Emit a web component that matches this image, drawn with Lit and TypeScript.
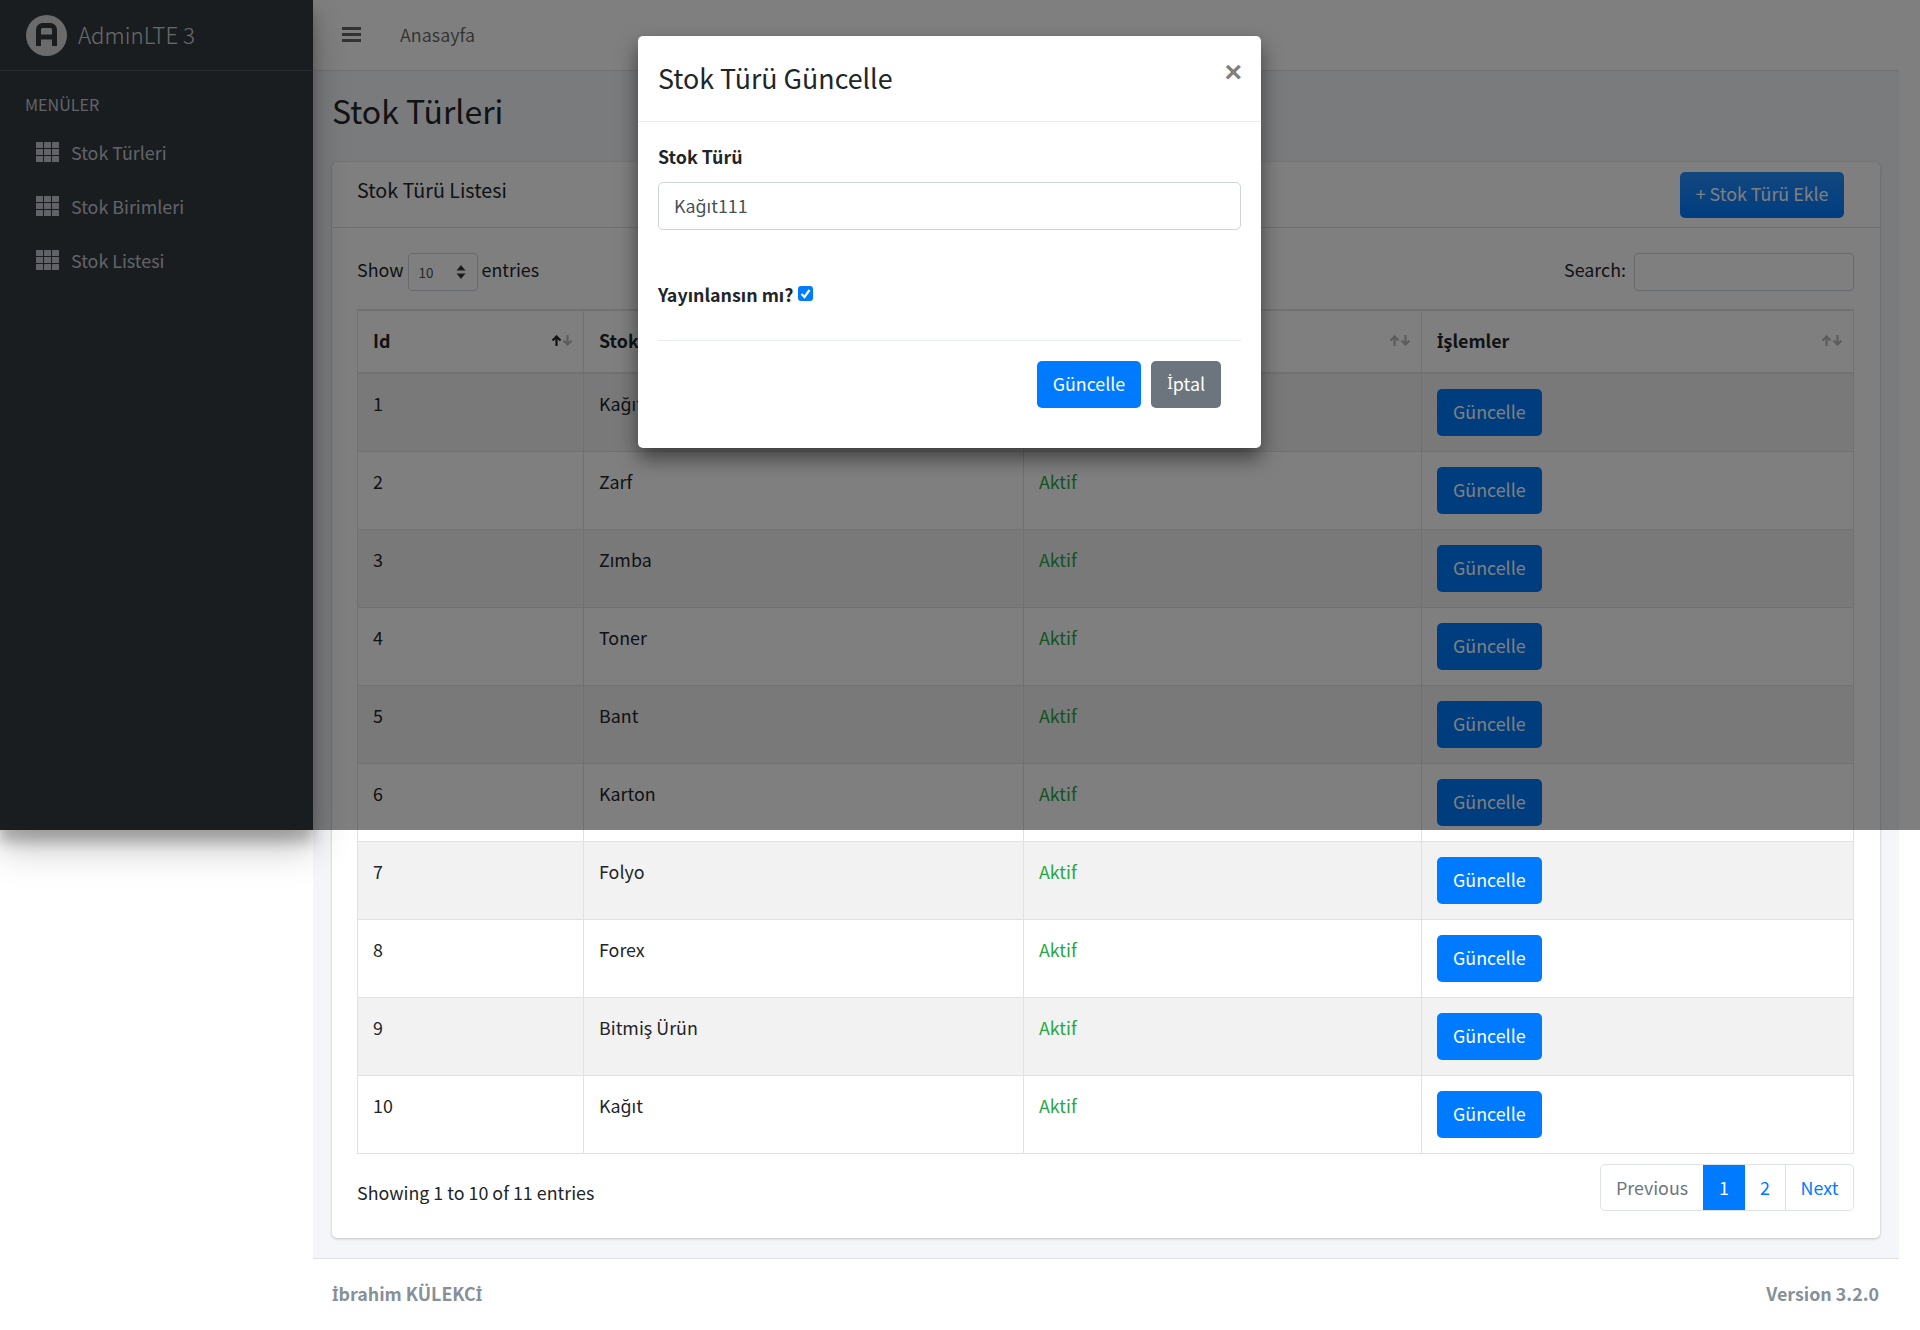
import { LitElement, html, css, svg } from 'lit';
import { customElement } from 'lit/decorators.js';

const ROWS = ['Kağıt', 'Zarf', 'Zımba', 'Toner', 'Bant', 'Karton', 'Folyo', 'Forex', 'Bitmiş Ürün', 'Kağıt'];
const MENU = ['Stok Türleri', 'Stok Birimleri', 'Stok Listesi'];

// the CJK family has no dotted capital I, so that one letter comes from another family
const dotI = html`<span class="dot-i">İ</span>`;

// 3x3 grid icon of the sidebar
const gridIcon = html`<svg class="grid-icon" viewBox="0 0 23 20">
  ${[0, 8, 16].map(x => [0, 7, 14].map(y => svg`<rect x=${x} y=${y} width="7" height="6" rx="0.5"></rect>`))}
</svg>`;

// sort arrows, `active` darkens the up arrow
const sortIcon = (active = false) => html`<svg class="sort-icon" viewBox="0 0 20 11">
  <path class=${active ? 'on' : ''} d="M4.500 11V1.500M.5 5.500l4-4 4 4"></path>
  <path d="M15.500 0v9.500M11.500 5.500l4 4 4-4"></path>
</svg>`;

@customElement('app-root')
export class AppRoot extends LitElement {
  static styles = css`
    :host {
      display: block;
      position: relative;
      height: 1330px;
      overflow: hidden;
      background: #fff;
      color: #212529;
      font-family: 'Noto Sans CJK SC', 'Noto Sans', sans-serif;
      font-size: 17.85px;
      line-height: 30px;
    }

    * {
      box-sizing: border-box;
    }

    .dot-i {
      font-family: 'Noto Sans', sans-serif;
      font-size: 0.93em;
    }

    .layout {
      display: flex;
      width: 1899px;
      height: 1330px;
    }

    /* Sidebar */
    .sidebar {
      flex: 0 0 313px;
      height: 830px;
      background: #343a40;
      color: #c2c7d0;
      position: relative;
      z-index: 1;
      box-shadow: 0 17px 35px rgba(0, 0, 0, 0.25), 0 12px 12px rgba(0, 0, 0, 0.22);
    }

    .brand {
      display: flex;
      align-items: center;
      gap: 11px;
      height: 71px;
      padding: 0 0 0 26px;
      border-bottom: 1px solid #4b545c;
      font-size: 22.3px;
      font-weight: 300;
      color: rgba(255, 255, 255, 0.8);
    }

    .brand span {
      margin-top: -2px;
    }

    .brand svg {
      width: 41px;
      height: 41px;
    }

    .menu-title {
      padding: 18px 0 0 25px;
      height: 55px;
      font-size: 16.1px;
    }

    .menu-item {
      display: flex;
      align-items: center;
      gap: 12px;
      height: 54px;
      padding: 0 0 2px 36px;
    }

    .grid-icon {
      width: 23px;
      height: 20px;
      fill: #c2c7d0;
    }

    /* Main column */
    .main {
      flex: 1;
      display: flex;
      flex-direction: column;
      min-width: 0;
    }

    .navbar {
      display: flex;
      align-items: center;
      height: 71px;
      padding: 0 0 2px 29px;
      gap: 39px;
      background: #fff;
      border-bottom: 1px solid #dee2e6;
      color: rgba(0, 0, 0, 0.6);
    }

    .burger {
      width: 19px;
      height: 15px;
      border-top: 3px solid rgba(0, 0, 0, 0.6);
      border-bottom: 3px solid rgba(0, 0, 0, 0.6);
    }

    .burger::after {
      content: '';
      display: block;
      height: 3px;
      margin-top: 3px;
      background: rgba(0, 0, 0, 0.6);
    }

    .content {
      flex: 1;
      background: #f4f6f9;
      padding: 20px 19px 0 19px;
    }

    h1 {
      margin: 0;
      height: 71px;
      font-size: 32px;
      font-weight: 400;
      line-height: 39px;
    }

    .card {
      height: 1076px;
      background: #fff;
      border-radius: 5px;
      box-shadow: 0 0 1px rgba(0, 0, 0, 0.125), 0 1px 3px rgba(0, 0, 0, 0.2);
    }

    .card-header {
      display: flex;
      justify-content: space-between;
      align-items: flex-start;
      height: 66px;
      padding: 10px 36px 0 25px;
      border-bottom: 1px solid rgba(0, 0, 0, 0.125);
      font-size: 19.7px;
    }

    .card-header > span {
      margin-top: 3px;
    }

    .card-body {
      padding: 25px 26px 0 25px;
    }

    .toolbar {
      display: flex;
      justify-content: space-between;
      height: 56px;
    }

    .toolbar > div {
      display: flex;
      align-items: flex-start;
      gap: 4px;
    }

    .toolbar > div > span {
      margin-top: 1px;
    }

    .select {
      display: flex;
      justify-content: space-between;
      align-items: center;
      width: 70px;
      height: 38px;
      padding: 0 11px 0 10px;
      border: 1px solid #ced4da;
      border-radius: 4px;
      font-size: 13.4px;
      color: #495057;
    }

    .select svg {
      width: 10px;
      height: 14px;
      fill: #343a40;
    }

    .search-box {
      width: 220px;
      height: 38px;
      margin-left: 4px;
      border: 1px solid #ced4da;
      border-radius: 4px;
    }

    table {
      width: 1496px;
      border-collapse: collapse;
      table-layout: fixed;
    }

    th,
    td {
      border: 1px solid #dee2e6;
      padding: 14px 15px 15px;
      text-align: left;
      vertical-align: top;
      height: 78px;
    }

    th {
      height: 63px;
      padding: 14px 15px 0;
      border-bottom-width: 2px;
      border-top-width: 2px;
      position: relative;
    }

    tbody tr:nth-child(odd) {
      background: #f2f2f2;
    }

    .sort-icon {
      position: absolute;
      right: 11px;
      top: 24px;
      width: 20px;
      height: 11px;
      fill: none;
      stroke: #b8b8b8;
      stroke-width: 2.2;
    }

    .sort-icon .on {
      stroke: #212529;
    }

    .aktif {
      color: #28a745;
    }

    .btn {
      display: inline-flex;
      align-items: center;
      justify-content: center;
      height: 47px;
      padding: 0 16px 3px;
      border-radius: 5px;
      background: #007bff;
      color: #fff;
    }

    td .btn {
      display: flex;
      width: fit-content;
      margin-top: 1px;
    }

    .btn-add {
      height: 46px;
      padding: 0 15.5px 4px;
      background: linear-gradient(180deg, #268fff, #007bff);
      font-size: 17.85px;
    }

    .btn-grey {
      background: #6c757d;
    }

    .table-foot {
      display: flex;
      justify-content: space-between;
      padding-top: 10px;
    }

    .table-foot > span {
      margin-top: 13px;
    }

    .pager {
      display: flex;
      width: 254px;
      height: 47px;
      border: 1px solid #dee2e6;
      border-radius: 5px;
      color: #007bff;
    }

    .pager span {
      display: flex;
      align-items: center;
      justify-content: center;
      padding-bottom: 2px;
      border-left: 1px solid #dee2e6;
    }

    .pager .prev {
      width: 102px;
      border-left: none;
      color: #6c757d;
    }

    .pager .current {
      width: 42px;
      background: #007bff;
      color: #fff;
      border: none;
    }

    .pager .p2 {
      width: 40px;
      border-left: none;
    }

    .pager .next {
      flex: 1;
    }

    .footer {
      display: flex;
      justify-content: space-between;
      height: 72px;
      padding: 19px 20px 0 19px;
      background: #fff;
      border-top: 1px solid #dee2e6;
      color: #869099;
      font-weight: 700;
    }

    /* Modal over the dimmed part of the page */
    .backdrop {
      position: absolute;
      left: 0;
      top: 0;
      width: 1920px;
      height: 830px;
      background: rgba(0, 0, 0, 0.5);
      z-index: 2;
    }

    .modal {
      position: absolute;
      left: 638px;
      top: 36px;
      width: 623px;
      height: 412px;
      background: #fff;
      border-radius: 5px;
      box-shadow: 0 10px 20px rgba(0, 0, 0, 0.5);
    }

    .modal-header {
      display: flex;
      justify-content: space-between;
      height: 86px;
      padding: 20px 19px 0 20px;
      border-bottom: 1px solid #e9ecef;
      font-size: 26.8px;
      line-height: 44px;
    }

    .close {
      margin-top: 1px;
      font-family: 'Liberation Sans', sans-serif;
      font-size: 30px;
      line-height: 30px;
      font-weight: 700;
      color: #808080;
    }

    .modal-body {
      padding: 19px 20px 0;
    }

    label {
      display: block;
      font-weight: 700;
    }

    .field {
      height: 48px;
      margin-top: 11px;
      padding: 7px 15px;
      border: 1px solid #ced4da;
      border-radius: 5px;
      color: #495057;
    }

    .publish {
      display: flex;
      align-items: flex-start;
      gap: 5px;
      margin-top: 51px;
      font-weight: 700;
    }

    .publish span {
      margin-top: -2px;
    }

    .check {
      width: 15px;
      height: 15px;
      margin-top: 5px;
      border-radius: 3px;
      background: #007bff;
    }

    .check svg {
      display: block;
      fill: none;
      stroke: #fff;
      stroke-width: 2.2;
    }

    .modal-body hr {
      margin: 31px 0 20px;
      border: none;
      border-top: 1px solid #e9ecef;
    }

    .modal-actions {
      display: flex;
      justify-content: flex-end;
      gap: 10px;
      padding-right: 20px;
    }
  `;

  render() {
    return html`
      <div class="layout">
        <aside class="sidebar">
          <div class="brand">
            <svg viewBox="0 0 41 41">
              <circle cx="20.500" cy="20.500" r="20.500" fill="#fff" opacity="0.8"></circle>
              <path d="M12.500 31V14.500a4 4 0 0 1 4-4h8a4 4 0 0 1 4 4V31M12.500 22h16" fill="none" stroke="#343a40" stroke-width="5"></path>
            </svg>
            <span>AdminLTE 3</span>
          </div>
          <div class="menu-title">MENÜLER</div>
          ${MENU.map(item => html`<div class="menu-item">${gridIcon}<span>${item}</span></div>`)}
        </aside>
        <div class="main">
          <nav class="navbar"><div class="burger"></div><span>Anasayfa</span></nav>
          <div class="content">
            <h1>Stok Türleri</h1>
            <section class="card">
              <div class="card-header">
                <span>Stok Türü Listesi</span>
                <div class="btn btn-add">+ Stok Türü Ekle</div>
              </div>
              <div class="card-body">
                <div class="toolbar">
                  <div>
                    <span>Show</span>
                    <div class="select">
                      <span>10</span>
                      <svg viewBox="0 0 10 14"><path d="M5 0l4.500 5.500h-9zM5 14L.5 8.500h9z"></path></svg>
                    </div>
                    <span>entries</span>
                  </div>
                  <div><span>Search:</span><div class="search-box"></div></div>
                </div>
                <table>
                  <colgroup>
                    <col style="width: 226px" /><col style="width: 440px" /><col style="width: 398px" /><col style="width: 432px" />
                  </colgroup>
                  <thead>
                    <tr>
                      <th>Id${sortIcon(true)}</th>
                      <th>Stok Türü${sortIcon()}</th>
                      <th>Durum${sortIcon()}</th>
                      <th>${dotI}şlemler${sortIcon()}</th>
                    </tr>
                  </thead>
                  <tbody>
                    ${ROWS.map((name, i) => html`
                      <tr>
                        <td>${i + 1}</td>
                        <td>${name}</td>
                        <td class="aktif">Aktif</td>
                        <td><div class="btn">Güncelle</div></td>
                      </tr>
                    `)}
                  </tbody>
                </table>
                <div class="table-foot">
                  <span>Showing 1 to 10 of 11 entries</span>
                  <div class="pager">
                    <span class="prev">Previous</span>
                    <span class="current">1</span>
                    <span class="p2">2</span>
                    <span class="next">Next</span>
                  </div>
                </div>
              </div>
            </section>
          </div>
          <footer class="footer"><span>${dotI}brahim KÜLEKC${dotI}</span><span>Version 3.2.0</span></footer>
        </div>
      </div>
      <div class="backdrop">
        <div class="modal">
          <div class="modal-header"><span>Stok Türü Güncelle</span><span class="close">×</span></div>
          <div class="modal-body">
            <label>Stok Türü</label>
            <div class="field">Kağıt111</div>
            <div class="publish">
              <span>Yayınlansın mı?</span>
              <div class="check"><svg viewBox="0 0 15 15"><path d="M3.500 8l3 3 5-7"></path></svg></div>
            </div>
            <hr />
            <div class="modal-actions">
              <div class="btn">Güncelle</div>
              <div class="btn btn-grey">${dotI}ptal</div>
            </div>
          </div>
        </div>
      </div>
    `;
  }
}
